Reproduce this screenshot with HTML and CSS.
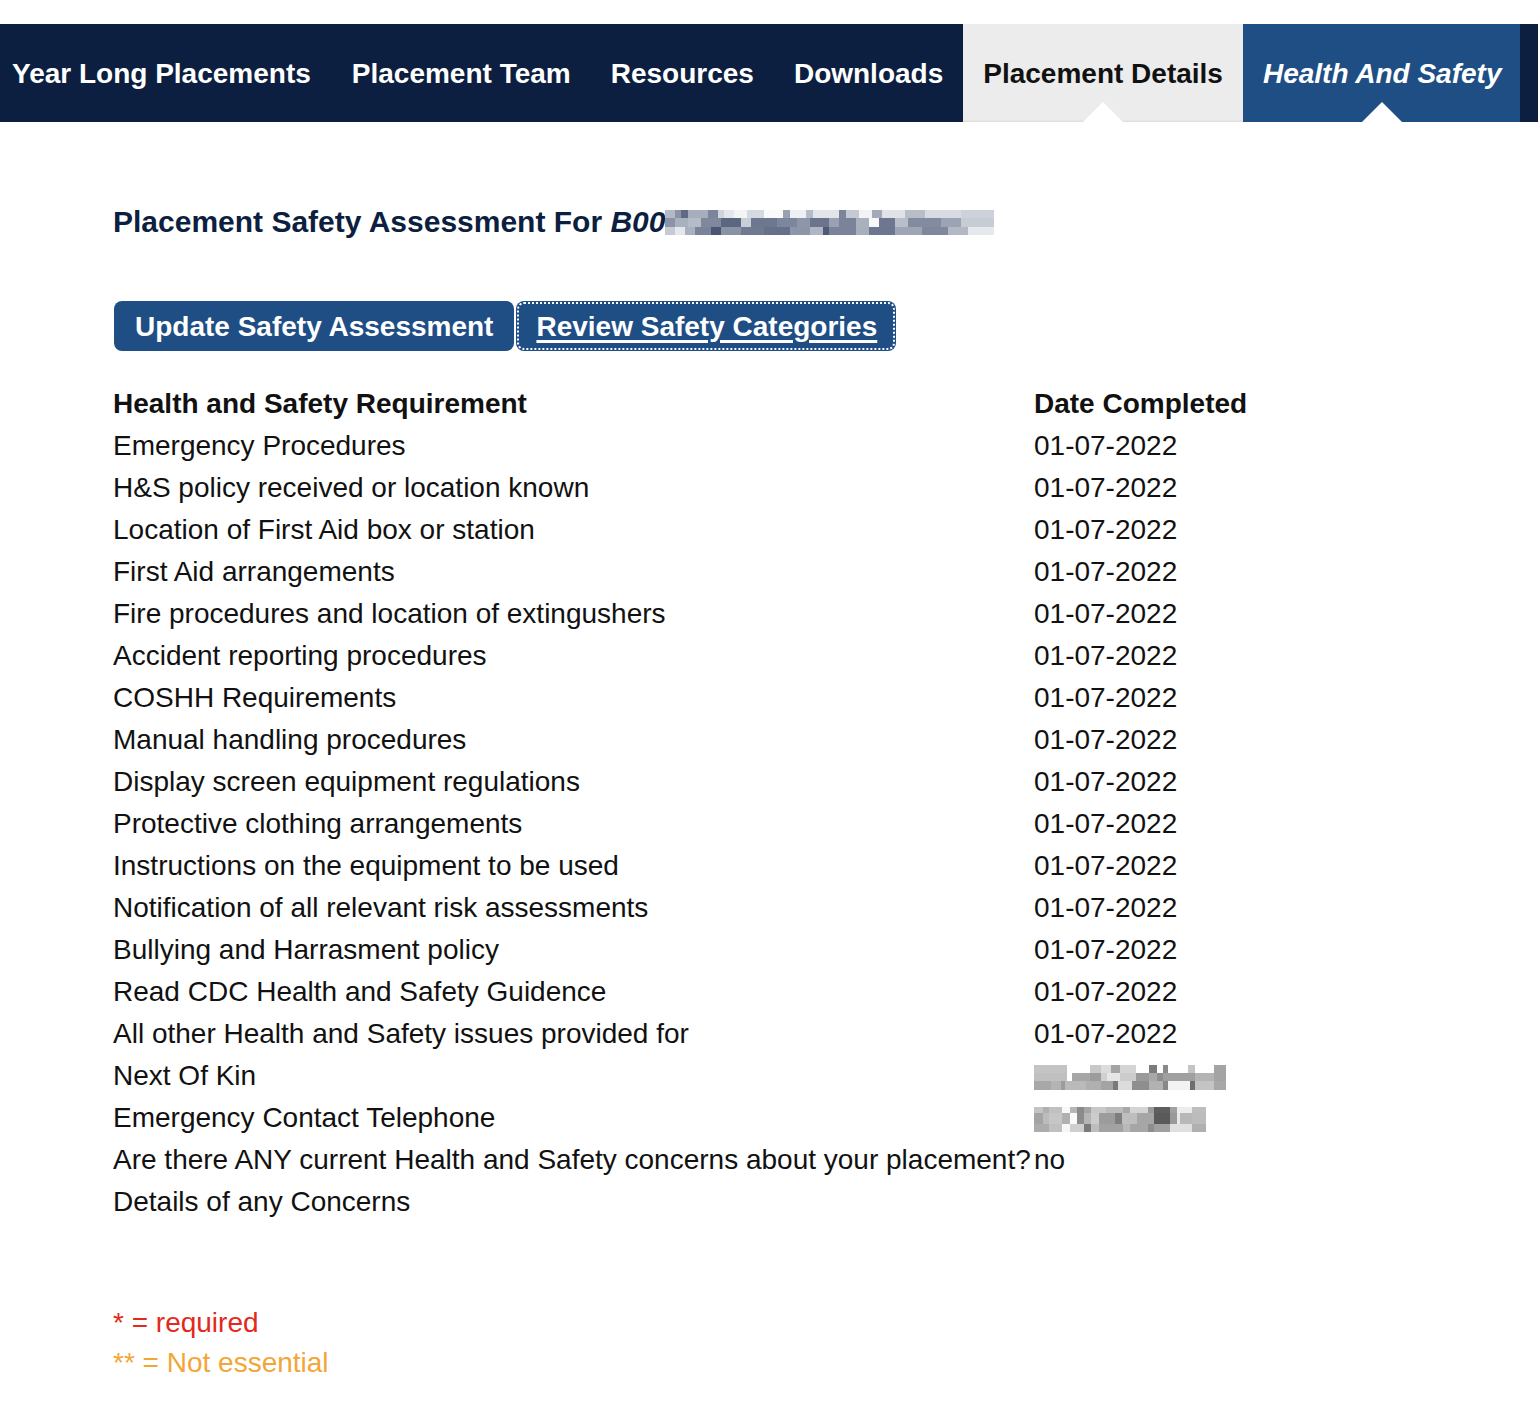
FILE: index.html
```html
<!DOCTYPE html>
<html lang="en">
<head>
<meta charset="utf-8">
<title>Health And Safety</title>
<link rel="stylesheet" href="styles.css">
</head>
<body>
<nav class="topnav">
  <ul class="tabs">
    <li class="tab tab-first">Year Long Placements</li>
    <li class="tab">Placement Team</li>
    <li class="tab">Resources</li>
    <li class="tab">Downloads</li>
    <li class="tab tab-light">Placement Details</li>
    <li class="tab tab-active">Health And Safety</li>
  </ul>
</nav>
<main class="content">
  <h1 class="title">Placement Safety Assessment For <em>B00</em><span class="blur blur-title"></span></h1>
  <div class="actions">
    <a class="btn" href="#">Update Safety Assessment</a>
    <a class="btn btn-focus" href="#">Review Safety Categories</a>
  </div>
  <table class="hs-table">
    <thead>
      <tr><th class="col-req">Health and Safety Requirement</th><th>Date Completed</th></tr>
    </thead>
    <tbody>
      <tr><td>Emergency Procedures</td><td>01-07-2022</td></tr>
      <tr><td>H&amp;S policy received or location known</td><td>01-07-2022</td></tr>
      <tr><td>Location of First Aid box or station</td><td>01-07-2022</td></tr>
      <tr><td>First Aid arrangements</td><td>01-07-2022</td></tr>
      <tr><td>Fire procedures and location of extingushers</td><td>01-07-2022</td></tr>
      <tr><td>Accident reporting procedures</td><td>01-07-2022</td></tr>
      <tr><td>COSHH Requirements</td><td>01-07-2022</td></tr>
      <tr><td>Manual handling procedures</td><td>01-07-2022</td></tr>
      <tr><td>Display screen equipment regulations</td><td>01-07-2022</td></tr>
      <tr><td>Protective clothing arrangements</td><td>01-07-2022</td></tr>
      <tr><td>Instructions on the equipment to be used</td><td>01-07-2022</td></tr>
      <tr><td>Notification of all relevant risk assessments</td><td>01-07-2022</td></tr>
      <tr><td>Bullying and Harrasment policy</td><td>01-07-2022</td></tr>
      <tr><td>Read CDC Health and Safety Guidence</td><td>01-07-2022</td></tr>
      <tr><td>All other Health and Safety issues provided for</td><td>01-07-2022</td></tr>
      <tr><td>Next Of Kin</td><td><span class="blur blur-kin"></span></td></tr>
      <tr><td>Emergency Contact Telephone</td><td><span class="blur blur-tel"></span></td></tr>
      <tr><td>Are there ANY current Health and Safety concerns about your placement?</td><td>no</td></tr>
      <tr><td>Details of any Concerns</td><td></td></tr>
    </tbody>
  </table>
  <div class="legend">
    <p class="legend-req">* = required</p>
    <p class="legend-opt">** = Not essential</p>
  </div>
</main>
</body>
</html>
```
FILE: styles.css
```css
html, body {
  margin: 0;
  padding: 0;
  background: #ffffff;
  font-family: "Liberation Sans", Arial, Helvetica, sans-serif;
  color: #111111;
}

.topnav {
  margin-top: 24px;
  background: #0d1f40;
  height: 98px;
}

.tabs {
  list-style: none;
  margin: 0;
  padding: 0;
  display: flex;
  height: 100%;
}

.tab {
  position: relative;
  display: flex;
  align-items: center;
  padding: 2px 20px 0;
  font-size: 28px;
  font-weight: bold;
  color: #ffffff;
  white-space: nowrap;
}

.tab-first {
  padding-left: 12px;
  padding-right: 21px;
}

.tab-light {
  background: #ececec;
  color: #111111;
  padding-left: 20px;
  padding-right: 20px;
  box-shadow: inset 0 -2px 2px -1px rgba(0, 0, 0, 0.08);
}

.tab-active {
  background: #1f4e85;
  font-style: italic;
  padding-left: 20px;
  padding-right: 19px;
}

.tab-light::after,
.tab-active::after {
  content: "";
  position: absolute;
  left: 50%;
  bottom: 0;
  margin-left: -20px;
  border-left: 20px solid transparent;
  border-right: 20px solid transparent;
  border-bottom: 20px solid #ffffff;
}

.content {
  padding: 79px 0 20px 113px;
}

.title {
  margin: 0;
  font-size: 30px;
  line-height: 42px;
  font-weight: bold;
  color: #0d1f40;
  white-space: nowrap;
}

.title em {
  font-style: italic;
}

.blur {
  display: inline-block;
  vertical-align: middle;
}

.title .blur {
  vertical-align: -3px;
}

.blur-title {
  width: 329px;
  height: 25px;
  background:
    linear-gradient(90deg, #b3b9c6 0 3%, #8b93a7 3% 5%, #5f6a85 5% 7%, #a6adbc 7% 13%, #7c859b 13% 16%, #cfd3db 16% 18%, #e3e6ea 18% 21%, #f3f4f6 21% 25%, #d5d9e0 25% 30%, #fafafb 30% 36%, #9aa1b2 36% 38%, #eef0f3 38% 43%, #b5bbc7 43% 45%, #e2e5e9 45% 53%, #7b849a 53% 55%, #c4c9d2 55% 59%, #f2f3f5 59% 63%, #a3aab9 63% 66%, #dfe2e7 66% 73%, #b8bdc8 73% 79%, #d8dbe2 79% 90%, #cdd1d9 90% 100%) 0 0 / 100% 8px no-repeat,
    linear-gradient(90deg, #8b93a7 0 3%, #a9b0be 3% 7%, #b5bbc7 7% 11%, #7f889d 11% 17%, #5b6681 17% 23%, #c9ced7 23% 26%, #6d7790 26% 34%, #7d869c 34% 40%, #8e96a9 40% 44%, #6a748d 44% 50%, #9aa1b2 50% 53%, #7a8399 53% 58%, #aab1be 58% 62%, #f7f8f9 62% 65%, #6e778f 65% 70%, #b9bec9 70% 74%, #828b9f 74% 84%, #9ca3b4 84% 90%, #c7ccd5 90% 100%) 0 8px / 100% 9px no-repeat,
    linear-gradient(90deg, #c5cad3 0 3%, #e4e7eb 3% 6%, #aab1be 6% 9%, #7a8399 9% 14%, #4a5573 14% 17%, #8a92a6 17% 23%, #6f7990 23% 30%, #65708a 30% 38%, #8d95a8 38% 44%, #b0b6c3 44% 48%, #4f5a77 48% 50%, #7a8399 50% 58%, #a8afbd 58% 62%, #6d7690 62% 70%, #9ea5b5 70% 78%, #7e879c 78% 86%, #b2b8c4 86% 92%, #e5e8ec 92% 100%) 0 17px / 100% 8px no-repeat;
}

.blur-kin {
  width: 192px;
  height: 25px;
  background:
    linear-gradient(90deg, #c4c4c4 0 17%, #ffffff 17% 29%, #c8c8c8 29% 35%, #dcdcdc 35% 40%, #a4a4a4 40% 45%, #d4d4d4 45% 53%, #ffffff 53% 60%, #7c7c7c 60% 64%, #ffffff 64% 67%, #8a8a8a 67% 70%, #ffffff 70% 80%, #c4c4c4 80% 84%, #ffffff 84% 94%, #a4a4a4 94% 100%) 0 0 / 100% 8px no-repeat,
    linear-gradient(90deg, #c0c0c0 0 17%, #ffffff 17% 20%, #a6a6a6 20% 29%, #9c9c9c 29% 35%, #d0d0d0 35% 38%, #e6e6e6 38% 45%, #cccccc 45% 53%, #9a9a9a 53% 60%, #a8a8a8 60% 64%, #8e8e8e 64% 67%, #a0a0a0 67% 84%, #b4b4b4 84% 94%, #a4a4a4 94% 100%) 0 8px / 100% 8px no-repeat,
    linear-gradient(90deg, #a8a8a8 0 9%, #b4b4b4 9% 14%, #9c9c9c 14% 16%, #bababa 16% 27%, #b0b0b0 27% 35%, #a4a4a4 35% 41%, #7a7a7a 41% 44%, #dcdcdc 44% 51%, #8e8e8e 51% 60%, #b2b2b2 60% 67%, #888888 67% 70%, #f2f2f2 70% 81%, #6e6e6e 81% 84%, #c4c4c4 84% 94%, #a8a8a8 94% 100%) 0 16px / 100% 9px no-repeat;
}

.blur-tel {
  width: 172px;
  height: 25px;
  background:
    linear-gradient(90deg, #c4c4c4 0 5%, #b0b0b0 5% 9%, #c0c0c0 9% 16%, #f8f8f8 16% 21%, #b6b6b6 21% 25%, #8a8a8a 25% 29%, #a4a4a4 29% 33%, #c8c8c8 33% 42%, #bcbcbc 42% 52%, #a8a8a8 52% 56%, #d4d4d4 56% 66%, #9a9a9a 66% 70%, #5e5e5e 70% 79%, #a0a0a0 79% 83%, #ececec 83% 92%, #bebebe 92% 100%) 0 0 / 100% 6px no-repeat,
    linear-gradient(90deg, #a4a4a4 0 5%, #bcbcbc 5% 9%, #c6c6c6 9% 16%, #b0b0b0 16% 21%, #fafafa 21% 25%, #8c8c8c 25% 29%, #b6b6b6 29% 33%, #cccccc 33% 38%, #9c9c9c 38% 47%, #7e7e7e 47% 51%, #bebebe 51% 60%, #a6a6a6 60% 70%, #5a5a5a 70% 79%, #999999 79% 83%, #e8e8e8 83% 85%, #b8b8b8 85% 92%, #bcbcbc 92% 100%) 0 6px / 100% 11px no-repeat,
    linear-gradient(90deg, #acacac 0 9%, #c0c0c0 9% 16%, #f6f6f6 16% 21%, #cfcfcf 21% 29%, #7a7a7a 29% 33%, #bdbdbd 33% 38%, #a2a2a2 38% 52%, #b8b8b8 52% 56%, #a6a6a6 56% 66%, #8e8e8e 66% 70%, #a0a0a0 70% 79%, #e0e0e0 79% 92%, #b0b0b0 92% 100%) 0 17px / 100% 8px no-repeat;
}

.actions {
  display: flex;
  gap: 2px;
  margin-top: 58px;
}

.btn {
  display: inline-block;
  height: 50px;
  line-height: 52px;
  padding: 0 21px;
  background: #1f4e85;
  color: #ffffff;
  border-radius: 8px;
  font-size: 28px;
  font-weight: bold;
  text-decoration: none;
  white-space: nowrap;
}

.btn:first-child {
  margin-left: 1px;
}

.btn-focus {
  padding: 0 19px 0 20px;
  text-decoration: underline;
  text-decoration-thickness: 3px;
  text-underline-offset: 4px;
  outline: 2px dotted #ffffff;
  outline-offset: -3px;
}

.hs-table {
  margin-top: 31px;
  border-collapse: collapse;
  border-spacing: 0;
  font-size: 28px;
}

.hs-table th,
.hs-table td {
  box-sizing: border-box;
  padding: 2px 0 0;
  line-height: 40px;
  height: 42px;
  text-align: left;
  vertical-align: middle;
  white-space: nowrap;
}

.hs-table th {
  font-weight: bold;
}

.col-req {
  width: 921px;
}

.legend {
  margin-top: 81px;
}

.legend p {
  margin: 0;
  font-size: 28px;
  line-height: 40px;
}

.legend-req {
  color: #e3291d;
}

.legend-opt {
  color: #f2a638;
}
```
